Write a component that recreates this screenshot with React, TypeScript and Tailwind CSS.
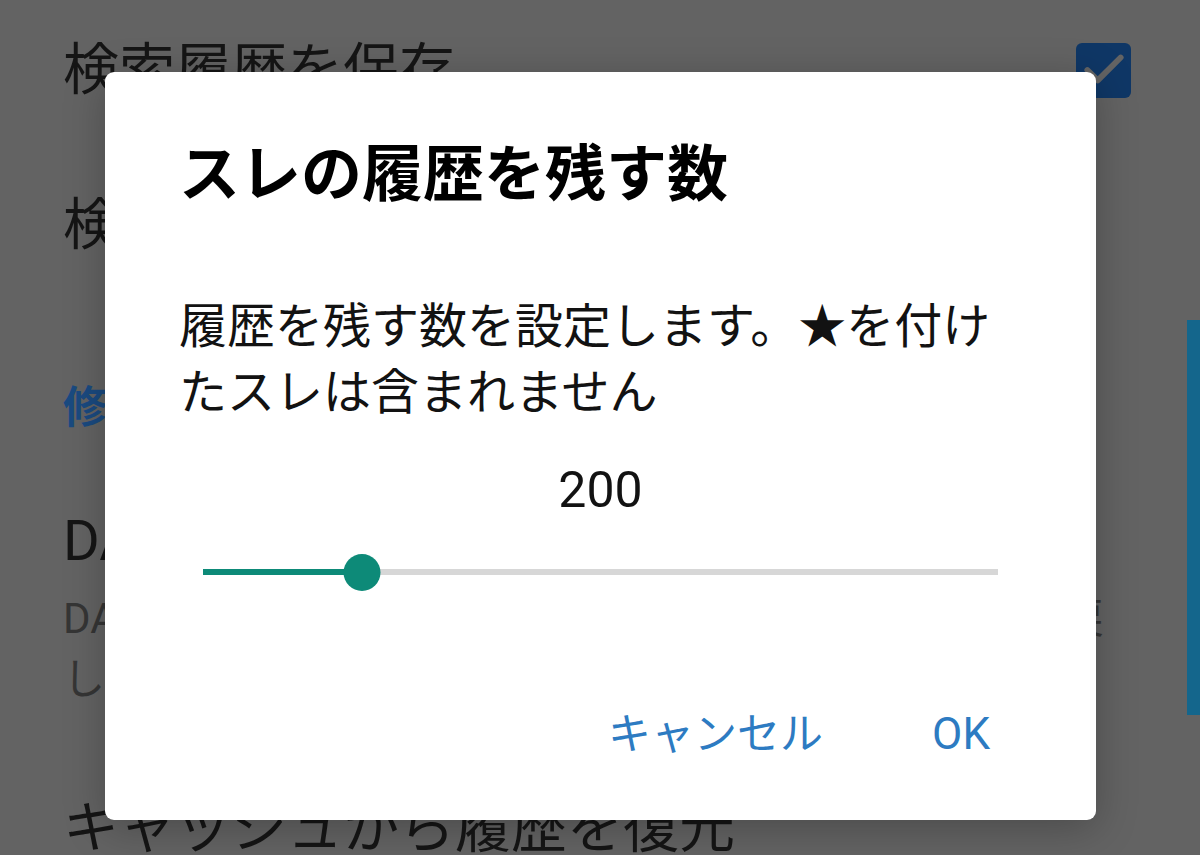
import { Check } from "lucide-react";

const MAX_HISTORY = 1000;

function SettingsBackdrop() {
  return (
    <div className="h-full w-full bg-[#636363] pl-[63px] pr-[69px] font-['Roboto','Noto_Sans_CJK_JP',sans-serif]">
      <div className="flex h-[140px] items-center justify-between">
        <span className="text-[56px] leading-[70px] text-[#151515]">検索履歴を保存</span>
        <span className="flex h-[55px] w-[55px] items-center justify-center rounded-[6px] bg-[#0f3766]">
          <Check className="size-[50px] text-[#646464]" strokeWidth={2.8} />
        </span>
      </div>
      <div className="flex h-[170px] items-center">
        <span className="text-[56px] leading-[70px] text-[#151515]">検索履歴を削除</span>
      </div>
      <div className="flex h-[196px] items-center">
        <span className="text-[44px] font-bold leading-[60px] text-[#1a4a80]">修復</span>
      </div>
      <div>
        <div className="text-[56px] leading-[70px] text-[#151515]">DAT落ちスレの履歴</div>
        <p className="mt-[12px] whitespace-nowrap text-[42px] leading-[61px] text-[#353535]">
          DAT落ちしたスレをキャッシュから読み込んで履歴に戻
          <br />
          します
        </p>
      </div>
      <div className="mt-[83px] text-[56px] leading-[70px] text-[#151515]">キャッシュから履歴を復元</div>
    </div>
  );
}

function HistorySlider({ value, max }: { value: number; max: number }) {
  const pct = (value / max) * 100;
  return (
    <div className="relative mx-[24px] mt-[34px] flex h-10 items-center">
      <div className="h-[6px] w-full bg-[#d7d7d7]" />
      <div className="absolute left-0 h-[6px] bg-[#0d8a78]" style={{ width: `${pct}%` }} />
      <div
        className="absolute h-[37px] w-[37px] -translate-x-1/2 rounded-full bg-[#0d8a78]"
        style={{ left: `${pct}%` }}
      />
    </div>
  );
}

function HistoryCountDialog() {
  const value = 200;
  return (
    <div className="absolute left-[105px] top-[72px] h-[748px] w-[991px] rounded-[9px] bg-white px-[74px] pt-[67px] shadow-[0_8px_40px_rgba(0,0,0,0.25)] font-['Roboto','Noto_Sans_CJK_JP',sans-serif]">
      <h2 className="text-[61px] font-bold leading-[72px] text-black">スレの履歴を残す数</h2>
      <p className="mt-[83px] text-[48px] leading-[66px] text-[#121212]">
        履歴を残す数を設定します。★を付けたスレは含まれません
      </p>
      <div className="mt-[36px] text-center text-[50px] leading-[56px] text-[#121212]">{value}</div>
      <HistorySlider value={value} max={MAX_HISTORY} />
      <div className="mt-[110px] flex justify-end gap-[49px] pr-[2px]">
        <button className="px-[30px] text-[43px] leading-[64px] text-[#2d7bc2]">キャンセル</button>
        <button className="px-[30px] text-[44px] leading-[64px] text-[#2d7bc2]">OK</button>
      </div>
    </div>
  );
}

export default function App() {
  return (
    <div className="relative h-[855px] w-[1200px] overflow-hidden">
      <SettingsBackdrop />
      <div className="absolute right-0 top-[320px] h-[395px] w-[13px] bg-[#14668c]" />
      <HistoryCountDialog />
    </div>
  );
}
